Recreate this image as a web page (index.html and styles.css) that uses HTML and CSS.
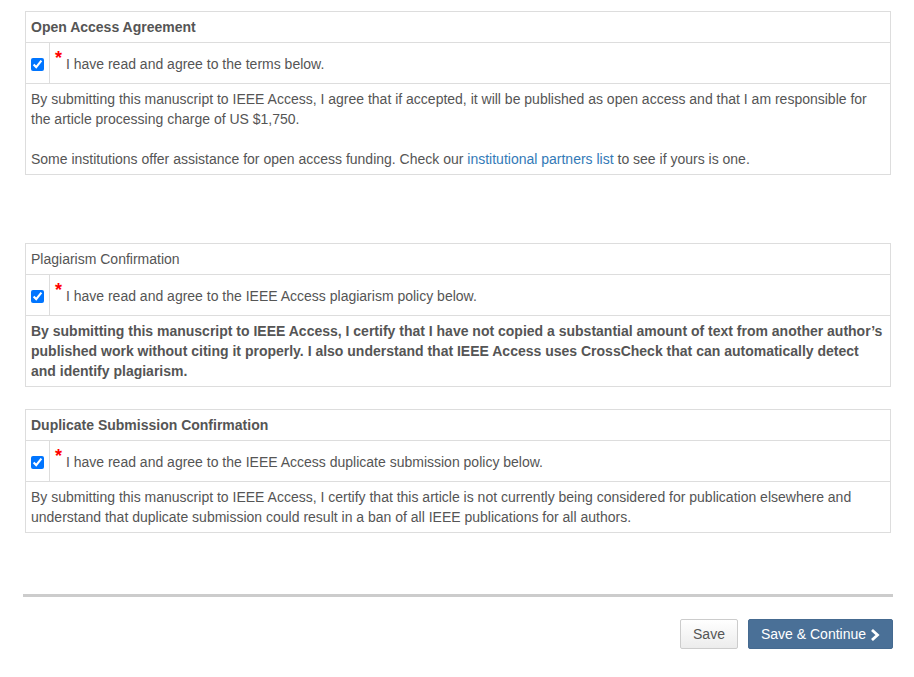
FILE: index.html
```html
<!DOCTYPE html>
<html lang="en">
<head>
    <meta charset="UTF-8">
    <title>Submission Agreements</title>
    <link rel="stylesheet" href="styles.css">
</head>
<body>
    <div class="page">
        <!-- Open access -->
        <table class="agree-table first">
            <tr><th colspan="2" class="bold">Open Access Agreement</th></tr>
            <tr class="check-row">
                <td class="check-cell"><input type="checkbox" checked></td>
                <td><span class="req">*</span> I have read and agree to the terms below.</td>
            </tr>
            <tr>
                <td colspan="2">
                    By submitting this manuscript to IEEE Access, I agree that if accepted, it will be published as open access and that I am responsible for the article processing charge of US $1,750.<br><br>
                    Some institutions offer assistance for open access funding. Check our <a href="#">institutional partners list</a> to see if yours is one.
                </td>
            </tr>
        </table>

        <!-- Plagiarism -->
        <table class="agree-table second">
            <tr><th colspan="2">Plagiarism Confirmation</th></tr>
            <tr class="check-row">
                <td class="check-cell"><input type="checkbox" checked></td>
                <td><span class="req">*</span> I have read and agree to the IEEE Access plagiarism policy below.</td>
            </tr>
            <tr>
                <td colspan="2" class="bold">
                    By submitting this manuscript to IEEE Access, I certify that I have not copied a substantial amount of text from another author’s published work without citing it properly. I also understand that IEEE Access uses CrossCheck that can automatically detect and identify plagiarism.
                </td>
            </tr>
        </table>

        <!-- Duplicate submission -->
        <table class="agree-table third">
            <tr><th colspan="2" class="bold">Duplicate Submission Confirmation</th></tr>
            <tr class="check-row">
                <td class="check-cell"><input type="checkbox" checked></td>
                <td><span class="req">*</span> I have read and agree to the IEEE Access duplicate submission policy below.</td>
            </tr>
            <tr>
                <td colspan="2">
                    By submitting this manuscript to IEEE Access, I certify that this article is not currently being considered for publication elsewhere and understand that duplicate submission could result in a ban of all IEEE publications for all authors.
                </td>
            </tr>
        </table>

        <hr class="divider">

        <div class="actions">
            <button class="btn btn-default">Save</button>
            <button class="btn btn-primary">Save &amp; Continue
                <svg class="chevron" width="10" height="12" viewBox="0 0 10 12"><path d="M2 1 L7.5 6 L2 11" fill="none" stroke="#fff" stroke-width="2.8"/></svg>
            </button>
        </div>
    </div>
</body>
</html>
```

FILE: styles.css
```css
body {
    margin: 0;
    font-family: "Liberation Sans", Arial, sans-serif;
    font-size: 14px;
    line-height: 20px;
    color: #555;
    background: #fff;
}
.page {
    width: 870px;
    margin-left: 23px;
    padding-top: 11px;
}
.agree-table {
    width: 866px;
    margin: 0 2px;
    border-collapse: collapse;
}
.agree-table.second {
    margin-top: 68px;
}
.agree-table.third {
    margin-top: 22px;
}
.agree-table th,
.agree-table td {
    border: 1px solid #ddd;
    padding: 5px 5px;
    text-align: left;
    vertical-align: top;
    font-weight: normal;
}
.agree-table .bold {
    font-weight: bold;
}
.check-row td {
    height: 30px;
    vertical-align: middle;
    padding-top: 6px;
    padding-bottom: 4px;
}
.check-row .check-cell {
    padding-top: 5px;
    padding-bottom: 5px;
}
.check-cell {
    width: 13px;
}
.check-cell input {
    margin: 3px 0 0 0;
    width: 13px;
    height: 13px;
    accent-color: #0075ff;
    display: block;
}
.req {
    color: #f00;
    font-size: 18px;
    font-weight: bold;
    line-height: 0;
    position: relative;
    top: -5px;
}
a {
    color: #337ab7;
    text-decoration: none;
}
.divider {
    margin: 61px 0 0 0;
    border: 0;
    border-top: 3px solid #ccc;
}
.actions {
    display: flex;
    justify-content: flex-end;
    gap: 10px;
    margin-top: 22px;
}
.btn {
    height: 30px;
    font-family: inherit;
    font-size: 14px;
    border-radius: 2px;
    cursor: pointer;
}
.btn-default {
    width: 58px;
    color: #555;
    background: linear-gradient(#fff, #ececec);
    border: 1px solid #ccc;
}
.btn-primary {
    width: 145px;
    color: #fff;
    background: #4a7097;
    border: 1px solid #456a90;
    display: flex;
    align-items: center;
    justify-content: center;
    gap: 4px;
    padding: 0 8px;
}
.chevron {
    margin-top: 1px;
}
```
